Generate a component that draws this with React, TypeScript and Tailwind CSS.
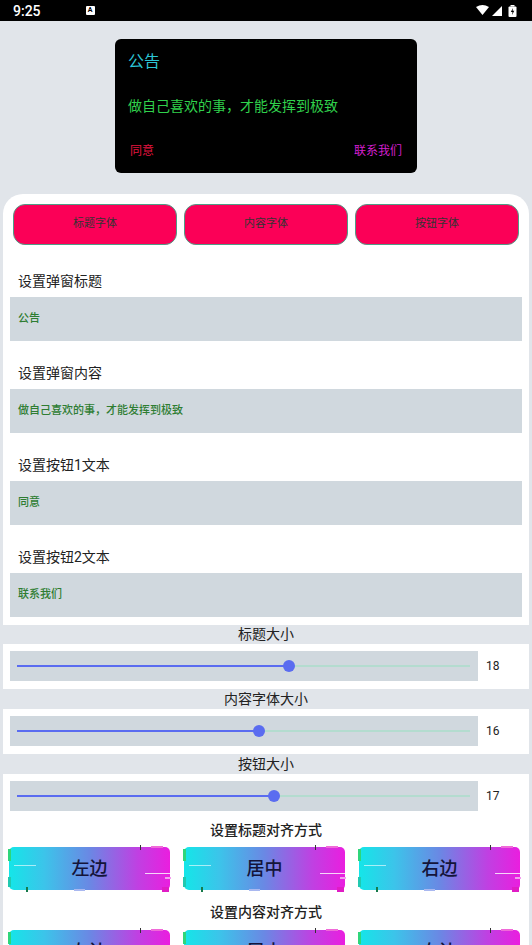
import React from 'react';

const font = "font-['Roboto','Noto_Sans_CJK_SC',sans-serif]";

const fields = [
  { label: '设置弹窗标题', value: '公告' },
  { label: '设置弹窗内容', value: '做自己喜欢的事，才能发挥到极致' },
  { label: '设置按钮1文本', value: '同意' },
  { label: '设置按钮2文本', value: '联系我们' },
];

function StatusBar() {
  return (
    <div className="h-[21px] bg-black flex items-center px-[13px] text-white">
      <span className="text-[14px] font-medium leading-none">9:25</span>
      <span className="ml-[45px] w-[9px] h-[9px] bg-white rounded-[1px] flex items-center justify-center text-black text-[7px] font-bold leading-none">
        A
      </span>
      <div className="ml-auto flex items-center gap-[3px] mr-[2px]">
        <svg width="13" height="11" viewBox="0 0 13 11">
          <path d="M0 2 Q6.5 -2 13 2 L6.5 10 Z" fill="white" />
        </svg>
        <svg width="10" height="10" viewBox="0 0 10 10">
          <path d="M10 0 L10 10 L0 10 Z" fill="white" />
        </svg>
        <svg width="9" height="12" viewBox="0 0 9 12" className="ml-[3px]">
          <rect x="2.5" y="0" width="4" height="1.5" fill="white" />
          <rect x="0.5" y="1.5" width="8" height="10.5" rx="1" fill="white" />
          <path d="M5 3 L2.8 7 L4.5 7 L4 10 L6.3 5.8 L4.6 5.8 Z" fill="black" />
        </svg>
      </div>
    </div>
  );
}

function Dialog() {
  return (
    <div className="flex justify-center pt-[18px]">
      <div className="w-[302px] h-[134px] bg-black rounded-[6px] px-[13px] pt-[12px] flex flex-col">
        <div className="text-[16px] leading-[22px] text-[#2cc6d6]">公告</div>
        <div className="mt-[23px] text-[14px] leading-[20px] text-[#30d14c]">
          做自己喜欢的事，才能发挥到极致
        </div>
        <div className="mt-[27px] flex justify-between px-[2px] text-[12px] leading-[16px]">
          <span className="text-[#e3143f]">同意</span>
          <span className="text-[#d41fcf]">联系我们</span>
        </div>
      </div>
    </div>
  );
}

function Slider({ value }: { value: number }) {
  const pct = (value / 30) * 100;
  return (
    <div className="pl-[7px] pt-[7px] pb-[8px] flex items-center">
      <div className="w-[468px] h-[30px] bg-[#d0d8de] pl-[7px] pr-[8px] flex items-center">
        <div className="relative w-full h-[2px] bg-[#b3dccf]">
          <div className="absolute left-0 top-0 h-[2px] bg-[#5a6cf0]" style={{ width: `${pct}%` }} />
          <div
            className="absolute top-1/2 w-[12px] h-[12px] -mt-[6px] -ml-[6px] rounded-full bg-[#5a6cf0]"
            style={{ left: `${pct}%` }}
          />
        </div>
      </div>
      <span className="ml-[8px] text-[12px] text-[#222]">{value}</span>
    </div>
  );
}

function StripTitle({ children, h }: { children: React.ReactNode; h: string }) {
  return <div className={`text-center text-[14px] text-[#222] ${h}`}>{children}</div>;
}

function GlitchButton({ text }: { text: string }) {
  return (
    <div className="relative h-[48px]">
      <div className="absolute inset-x-[1px] top-[2px] bottom-[3px] rounded-[5px] bg-[linear-gradient(to_right,#14e6e8,#3cc4ea_22%,#6a88e4_50%,#c040e2_80%,#ea1edf)] flex items-center justify-center">
        <span className="text-[18px] font-medium text-[#14143a] leading-none">{text}</span>
      </div>
      {/* glitch marks */}
      <div className="absolute left-0 top-[4px] w-[3px] h-[12px] bg-[#2fd67a]" />
      <div className="absolute left-0 bottom-[6px] w-[3px] h-[10px] bg-[#22c9b0]" />
      <div className="absolute left-[6px] top-[20px] w-[22px] h-[1px] bg-white/60" />
      <div className="absolute left-[18px] bottom-[1px] w-[2px] h-[5px] bg-[#177a4a]" />
      <div className="absolute left-[66px] bottom-[2px] w-[11px] h-[2px] bg-[#a9b8f0]" />
      <div className="absolute right-[30px] top-0 w-[1px] h-[5px] bg-[#333]" />
      <div className="absolute right-[8px] top-[1px] w-[12px] h-[2px] bg-[#f06ad8]" />
      <div className="absolute right-[0px] top-[28px] w-[26px] h-[1px] bg-white/80" />
      <div className="absolute right-[0px] top-[32px] w-[6px] h-[2px] bg-[#f2a0ee]" />
      <div className="absolute right-[2px] bottom-[1px] w-[7px] h-[5px] bg-[#e01cc4]" />
    </div>
  );
}

function AlignRow() {
  return (
    <div className="grid grid-cols-3 gap-[12px] pl-[5px] pr-[8px]">
      {['左边', '居中', '右边'].map((t) => (
        <GlitchButton key={t} text={t} />
      ))}
    </div>
  );
}

export default function App() {
  return (
    <div className={`w-[532px] h-[945px] overflow-hidden bg-[#e1e5ea] ${font}`}>
      <StatusBar />
      <Dialog />

      <div className="mt-[21px] mx-[3px] bg-white rounded-t-[20px] px-[7px] pt-[10px] pb-[8px]">
        <div className="grid grid-cols-3 gap-[7px] px-[3px]">
          {['标题字体', '内容字体', '按钮字体'].map((t) => (
            <button
              key={t}
              className="h-[41px] rounded-[12px] bg-[#fb0057] border border-[#4f9c86] text-[11px] text-[#333]"
            >
              {t}
            </button>
          ))}
        </div>
        <div className="mt-[4px]">
          {fields.map((f, i) => (
            <div key={f.label} className={i === 0 ? 'mt-[26px]' : 'mt-[22px]'}>
              <div className="pl-[8px] text-[14px] leading-[20px] text-[#222]">{f.label}</div>
              <div className="mt-[6px] h-[44px] bg-[#d0d8de] pl-[8px] flex items-center text-[11px] font-medium text-[#2e7d32]">
                {f.value}
              </div>
            </div>
          ))}
        </div>
      </div>

      <StripTitle h="h-[19px] leading-[19px]">标题大小</StripTitle>
      <div className="mx-[3px] bg-white">
        <Slider value={18} />
      </div>
      <StripTitle h="h-[20px] leading-[20px]">内容字体大小</StripTitle>
      <div className="mx-[3px] bg-white">
        <Slider value={16} />
      </div>
      <StripTitle h="h-[20px] leading-[20px]">按钮大小</StripTitle>

      <div className="mx-[3px] bg-white pb-[20px]">
        <Slider value={17} />
        <div className="mt-[1px] text-center text-[14px] leading-[20px] font-medium text-[#222]">设置标题对齐方式</div>
        <div className="mt-[5px]">
          <AlignRow />
        </div>
        <div className="mt-[9px] text-center text-[14px] leading-[20px] font-medium text-[#222]">设置内容对齐方式</div>
        <div className="mt-[6px]">
          <AlignRow />
        </div>
      </div>
    </div>
  );
}
